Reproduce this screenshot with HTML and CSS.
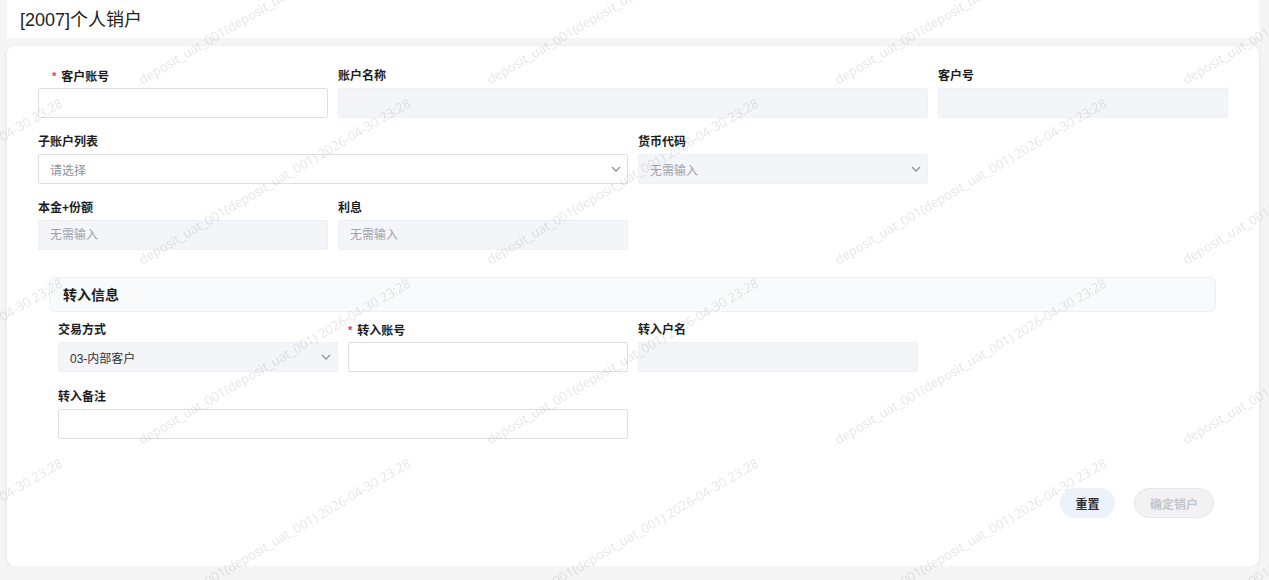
FILE: index.html
```html
<!DOCTYPE html>
<html lang="zh-CN">
<head>
    <meta charset="UTF-8">
    <meta name="viewport" content="width=device-width, initial-scale=1.0">
    <title>[2007]个人销户</title>
    <link rel="stylesheet" href="styles.css">
</head>
<body>
    <div class="page-header">[2007]个人销户</div>

    <div class="card">
        <div class="form-grid">
            <div class="field">
                <label class="field-label required indent">客户账号</label>
                <input class="input" type="text">
            </div>
            <div class="field span-2">
                <label class="field-label">账户名称</label>
                <input class="input" type="text" disabled>
            </div>
            <div class="field">
                <label class="field-label">客户号</label>
                <input class="input" type="text" disabled>
            </div>

            <div class="field span-2">
                <label class="field-label">子账户列表</label>
                <div class="select">
                    <span class="placeholder">请选择</span>
                    <svg class="chevron" width="10" height="6" viewBox="0 0 10 6"><polyline points="1,1 5,5 9,1" /></svg>
                </div>
            </div>
            <div class="field">
                <label class="field-label">货币代码</label>
                <div class="select disabled">
                    <span class="placeholder">无需输入</span>
                    <svg class="chevron" width="10" height="6" viewBox="0 0 10 6"><polyline points="1,1 5,5 9,1" /></svg>
                </div>
            </div>
            <div class="field"></div>

            <div class="field">
                <label class="field-label">本金+份额</label>
                <input class="input" type="text" placeholder="无需输入" disabled>
            </div>
            <div class="field">
                <label class="field-label">利息</label>
                <input class="input" type="text" placeholder="无需输入" disabled>
            </div>
        </div>

        <div class="section-title">转入信息</div>

        <div class="form-grid sub-grid">
            <div class="field">
                <label class="field-label">交易方式</label>
                <div class="select disabled">
                    <span class="value">03-内部客户</span>
                    <svg class="chevron" width="10" height="6" viewBox="0 0 10 6"><polyline points="1,1 5,5 9,1" /></svg>
                </div>
            </div>
            <div class="field">
                <label class="field-label required">转入账号</label>
                <input class="input" type="text">
            </div>
            <div class="field">
                <label class="field-label">转入户名</label>
                <input class="input" type="text" disabled>
            </div>
            <div class="field"></div>

            <div class="field span-2">
                <label class="field-label">转入备注</label>
                <input class="input" type="text">
            </div>
        </div>

        <div class="actions">
            <button class="btn btn-reset">重置</button>
            <button class="btn btn-submit" disabled>确定销户</button>
        </div>
    </div>

    <div class="watermark" id="watermark"></div>

    <script>
        // Fill the watermark layer with repeated user/time stamps
        const watermark = document.getElementById('watermark');
        for (let i = 0; i < 25; i++) {
            const cell = document.createElement('div');
            cell.className = 'watermark-cell';
            cell.innerHTML = '<span>deposit_uat_001(deposit_uat_001) 2026-04-30 23:28</span>';
            watermark.appendChild(cell);
        }
    </script>
</body>
</html>
```

FILE: styles.css
```css
* {
    box-sizing: border-box;
}

body {
    margin: 0;
    padding: 0 10px 0 7px;
    background-color: #f5f5f6;
    font-family: "Liberation Sans", "Noto Sans CJK SC", sans-serif;
    color: #303133;
    overflow: hidden;
}

.page-header {
    height: 38px;
    background-color: #fff;
    padding-left: 13px;
    font-size: 18px;
    line-height: 40px;
    color: #222;
}

.card {
    margin-top: 8px;
    height: 520px;
    background-color: #fff;
    border-radius: 8px;
    box-shadow: 0 1px 4px rgba(0, 0, 0, 0.08);
    padding: 20px 31px 0 31px;
}

.form-grid {
    display: grid;
    grid-template-columns: repeat(4, 290px);
    column-gap: 10px;
    row-gap: 14px;
}

.sub-grid {
    grid-template-columns: repeat(4, 280px);
    row-gap: 15px;
    margin-top: 8px;
    margin-left: 20px;
}

.span-2 {
    grid-column: span 2;
}

.field {
    display: flex;
    flex-direction: column;
}

.field-label {
    height: 20px;
    line-height: 20px;
    margin-bottom: 2px;
    font-size: 12px;
    font-weight: bold;
    color: #1d1d1f;
}

.field-label.indent {
    padding-left: 14px;
}

.required::before {
    content: "*";
    color: #f0383b;
    margin-right: 5px;
    font-size: 11px;
    vertical-align: 1px;
}

.input,
.select {
    height: 30px;
    width: 100%;
    border: 1px solid #dcdfe6;
    border-radius: 2px;
    background-color: #fff;
    padding: 0 11px;
    font-family: inherit;
    font-size: 12px;
    color: #303133;
    outline: none;
}

.input:disabled,
.select.disabled {
    background-color: #f4f5f8;
    border-color: #edf0f5;
}

.input::placeholder {
    color: #9ea3ad;
}

.select {
    display: flex;
    align-items: center;
    justify-content: space-between;
    padding-right: 6px;
}

.select .placeholder {
    color: #8e929a;
}

.select.disabled .placeholder {
    color: #9ea3ad;
}

.select .value {
    color: #303133;
}

.chevron polyline {
    fill: none;
    stroke: #8f94a0;
    stroke-width: 1.3;
}

.section-title {
    margin: 27px 12px 0 11px;
    height: 35px;
    line-height: 35px;
    padding-left: 13px;
    background-color: #f9fafc;
    border: 1px solid #eceff5;
    border-radius: 6px;
    font-size: 14px;
    font-weight: bold;
    color: #1d1d1f;
}

.actions {
    display: flex;
    justify-content: flex-end;
    gap: 19px;
    margin-top: 49px;
    padding-right: 14px;
}

.btn {
    height: 30px;
    border-radius: 15px;
    font-family: inherit;
    font-size: 12px;
    font-weight: bold;
    border: 1px solid transparent;
}

.btn-reset {
    width: 55px;
    background-color: #edf2fa;
    color: #2d2f33;
}

.btn-submit {
    width: 80px;
    background-color: #f2f2f4;
    border-color: #e6e6e9;
    color: #c3c5cb;
}

/* watermark layer over the whole page */
.watermark {
    position: fixed;
    top: -89px;
    left: -248px;
    display: grid;
    grid-template-columns: repeat(5, 348px);
    grid-auto-rows: 180px;
    pointer-events: none;
    z-index: 10;
}

.watermark-cell {
    display: flex;
    align-items: center;
    justify-content: center;
}

.watermark-cell span {
    white-space: nowrap;
    transform: rotate(-30.5deg);
    font-family: "Open Sans", sans-serif;
    font-size: 13px;
    color: rgba(0, 0, 0, 0.11);
}
```
